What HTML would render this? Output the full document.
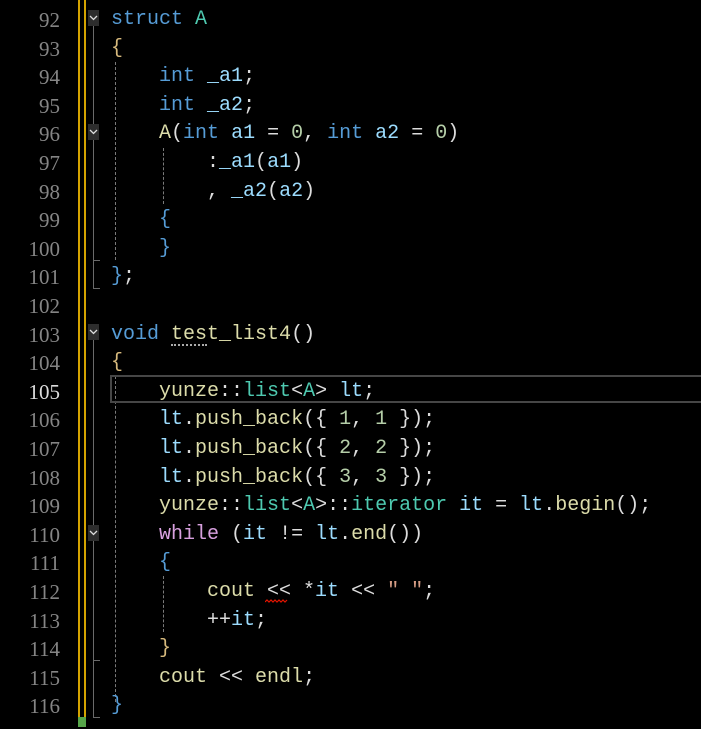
<!DOCTYPE html>
<html><head><meta charset="utf-8"><style>
body{margin:0;background:#000;width:701px;height:727px;overflow:hidden;position:relative;font-family:"Liberation Mono","Noto Sans CJK SC",monospace;font-size:20px;}
#w{position:absolute;left:0;top:2px;width:701px;height:727px;}
.ln{position:absolute;left:0;width:60px;text-align:right;color:#858585;font-family:"Liberation Serif","Noto Serif CJK SC",serif;font-size:21px;height:28.6px;line-height:28.6px;}
.c{position:absolute;left:111px;white-space:pre;color:#dcdcdc;height:28.6px;line-height:28.6px;}
.k{color:#569cd6}.t{color:#4ec9b0}.v{color:#9cdcfe}.f{color:#dcdcaa}.g{color:#d7ba7d}.p{color:#d8a0df}.n{color:#b5cea8}.s{color:#d69d85}
.vl{position:absolute;}
.fold{position:absolute;left:88px;width:11px;height:16px;background:#2d2d2d;}
.dash{position:absolute;width:0;border-left:1px dashed #7a7a7a;}
</style></head><body>
<div class="vl" style="left:78px;top:0;width:2px;height:727px;background:#d4a300"></div>
<div class="vl" style="left:84px;top:0;width:2px;height:727px;background:#d4a300"></div>
<div class="vl" style="left:78px;top:717px;width:8px;height:10px;background:#57a64a"></div>
<div class="vl" style="left:93px;top:26px;width:1px;height:262px;background:#6a6a6a"></div>
<div class="vl" style="left:93px;top:260px;width:7px;height:1px;background:#6a6a6a"></div>
<div class="vl" style="left:93px;top:288px;width:7px;height:1px;background:#6a6a6a"></div>
<div class="vl" style="left:93px;top:340px;width:1px;height:378px;background:#6a6a6a"></div>
<div class="vl" style="left:93px;top:660px;width:7px;height:1px;background:#6a6a6a"></div>
<div class="vl" style="left:93px;top:717px;width:7px;height:1px;background:#6a6a6a"></div>
<div class="fold" style="top:10px"><svg width="11" height="16"><path d="M2 6 L5.5 9.5 L9 6" stroke="#ddd" stroke-width="1.3" fill="none"/></svg></div>
<div class="fold" style="top:124px"><svg width="11" height="16"><path d="M2 6 L5.5 9.5 L9 6" stroke="#ddd" stroke-width="1.3" fill="none"/></svg></div>
<div class="fold" style="top:324px"><svg width="11" height="16"><path d="M2 6 L5.5 9.5 L9 6" stroke="#ddd" stroke-width="1.3" fill="none"/></svg></div>
<div class="fold" style="top:525px"><svg width="11" height="16"><path d="M2 6 L5.5 9.5 L9 6" stroke="#ddd" stroke-width="1.3" fill="none"/></svg></div>
<div class="dash" style="left:115px;top:62px;height:198px"></div>
<div class="dash" style="left:163px;top:148px;height:56px"></div>
<div class="dash" style="left:115px;top:376px;height:326px"></div>
<div class="dash" style="left:163px;top:576px;height:56px"></div>
<div class="vl" style="left:110px;top:375px;width:600px;height:24px;border:2px solid #464646"></div>
<div class="vl" style="left:171px;top:344px;width:36px;height:0;border-top:2px dotted #aaa"></div>
<svg class="vl" style="left:265px;top:599px" width="24" height="6"><path d="M0 3 l2 -2 l2 2 l2 -2 l2 2 l2 -2 l2 2 l2 -2 l2 2 l2 -2 l2 2 l2 -2" stroke="#e51400" fill="none" stroke-width="1.2"/></svg>
<div id="w">
<div class="ln" style="top:4px">92</div><div class="c" style="top:4px"><span class="k">struct</span> <span class="t">A</span></div>
<div class="ln" style="top:32.6px">93</div><div class="c" style="top:32.6px"><span class="g">{</span></div>
<div class="ln" style="top:61.2px">94</div><div class="c" style="top:61.2px">    <span class="k">int</span> <span class="v">_a1</span>;</div>
<div class="ln" style="top:89.8px">95</div><div class="c" style="top:89.8px">    <span class="k">int</span> <span class="v">_a2</span>;</div>
<div class="ln" style="top:118.4px">96</div><div class="c" style="top:118.4px">    <span class="f">A</span>(<span class="k">int</span> <span class="v">a1</span> = <span class="n">0</span>, <span class="k">int</span> <span class="v">a2</span> = <span class="n">0</span>)</div>
<div class="ln" style="top:147px">97</div><div class="c" style="top:147px">        :<span class="v">_a1</span>(<span class="v">a1</span>)</div>
<div class="ln" style="top:175.6px">98</div><div class="c" style="top:175.6px">        , <span class="v">_a2</span>(<span class="v">a2</span>)</div>
<div class="ln" style="top:204.2px">99</div><div class="c" style="top:204.2px">    <span class="k">{</span></div>
<div class="ln" style="top:232.8px">100</div><div class="c" style="top:232.8px">    <span class="k">}</span></div>
<div class="ln" style="top:261.4px">101</div><div class="c" style="top:261.4px"><span class="k">}</span>;</div>
<div class="ln" style="top:290px">102</div>
<div class="ln" style="top:318.6px">103</div><div class="c" style="top:318.6px"><span class="k">void</span> <span class="f">test_list4</span>()</div>
<div class="ln" style="top:347.2px">104</div><div class="c" style="top:347.2px"><span class="g">{</span></div>
<div class="ln" style="top:375.8px;color:#dcdcdc">105</div><div class="c" style="top:375.8px">    <span class="f">yunze</span>::<span class="t">list</span>&lt;<span class="t">A</span>&gt; <span class="v">lt</span>;</div>
<div class="ln" style="top:404.4px">106</div><div class="c" style="top:404.4px">    <span class="v">lt</span>.<span class="f">push_back</span>({ <span class="n">1</span>, <span class="n">1</span> });</div>
<div class="ln" style="top:433px">107</div><div class="c" style="top:433px">    <span class="v">lt</span>.<span class="f">push_back</span>({ <span class="n">2</span>, <span class="n">2</span> });</div>
<div class="ln" style="top:461.6px">108</div><div class="c" style="top:461.6px">    <span class="v">lt</span>.<span class="f">push_back</span>({ <span class="n">3</span>, <span class="n">3</span> });</div>
<div class="ln" style="top:490.2px">109</div><div class="c" style="top:490.2px">    <span class="f">yunze</span>::<span class="t">list</span>&lt;<span class="t">A</span>&gt;::<span class="t">iterator</span> <span class="v">it</span> = <span class="v">lt</span>.<span class="f">begin</span>();</div>
<div class="ln" style="top:518.8px">110</div><div class="c" style="top:518.8px">    <span class="p">while</span> (<span class="v">it</span> != <span class="v">lt</span>.<span class="f">end</span>())</div>
<div class="ln" style="top:547.4px">111</div><div class="c" style="top:547.4px">    <span class="k">{</span></div>
<div class="ln" style="top:576px">112</div><div class="c" style="top:576px">        <span class="f">cout</span> &lt;&lt; *<span class="v">it</span> &lt;&lt; <span class="s">" "</span>;</div>
<div class="ln" style="top:604.6px">113</div><div class="c" style="top:604.6px">        ++<span class="v">it</span>;</div>
<div class="ln" style="top:633.2px">114</div><div class="c" style="top:633.2px">    <span class="g">}</span></div>
<div class="ln" style="top:661.8px">115</div><div class="c" style="top:661.8px">    <span class="f">cout</span> &lt;&lt; <span class="f">endl</span>;</div>
<div class="ln" style="top:690.4px">116</div><div class="c" style="top:690.4px"><span class="k">}</span></div>
</div>
</body></html>
